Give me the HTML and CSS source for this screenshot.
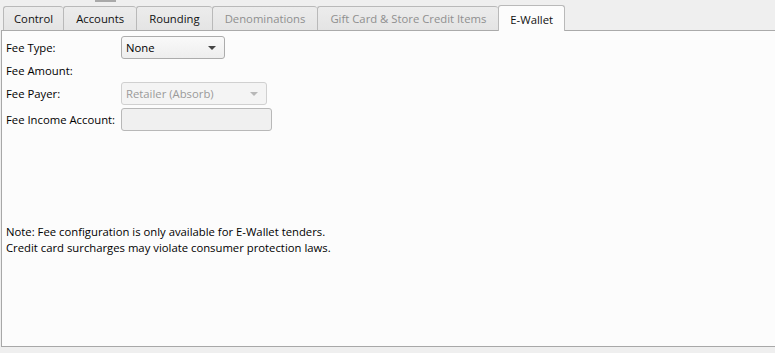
FILE: index.html
```html
<!DOCTYPE html>
<html lang="en">
<head>
    <meta charset="UTF-8">
    <title>Tender Settings</title>
    <link rel="stylesheet" href="styles.css">
</head>
<body>
    <div id="top-grip"></div>
    <div id="tab-pane">
        <div id="tab-header">
            <div class="tab">Control</div>
            <div class="tab">Accounts</div>
            <div class="tab">Rounding</div>
            <div class="tab disabled">Denominations</div>
            <div class="tab disabled">Gift Card &amp; Store Credit Items</div>
            <div class="tab selected">E-Wallet</div>
        </div>
        <div id="tab-content">
            <div id="fee-form">
                <div class="row">
                    <label>Fee Type:</label>
                    <div class="combo fee-type">
                        <span>None</span>
                        <span class="arrow"></span>
                    </div>
                </div>
                <div class="row">
                    <label>Fee Amount:</label>
                </div>
                <div class="row">
                    <label>Fee Payer:</label>
                    <div class="combo fee-payer disabled">
                        <span>Retailer (Absorb)</span>
                        <span class="arrow"></span>
                    </div>
                </div>
                <div class="row income">
                    <label>Fee Income Account:</label>
                    <input type="text" class="field" disabled>
                </div>
            </div>
            <div id="note">
                Note: Fee configuration is only available for E-Wallet tenders.<br>
                Credit card surcharges may violate consumer protection laws.
            </div>
        </div>
    </div>
</body>
</html>
```

FILE: styles.css
```css
body {
    margin: 0;
    background: #efefef;
    font-family: "Open Sans", "Noto Sans", sans-serif;
    font-size: 11.3px;
    color: #000;
}
#top-grip {
    width: 21px;
    height: 2px;
    margin-left: 95px;
    background: #a9a9a9;
}
#tab-pane {
    display: flex;
    flex-direction: column;
}
#tab-header {
    display: flex;
    align-items: flex-end;
    height: 28px;
    padding-left: 3px;
}
.tab {
    height: 23px;
    line-height: 23px;
    padding: 0 12px;
    border: 1px solid #b9b9b9;
    border-bottom: none;
    border-right: none;
    border-radius: 3px 3px 0 0;
    background: linear-gradient(#ececec, #e4e4e4);
    color: #111;
    box-sizing: content-box;
    white-space: nowrap;
}
.tab:first-child {
    padding: 0 10px;
}
.tab.disabled {
    color: #8f8f8f;
}
.tab.selected {
    height: 25px;
    line-height: 27px;
    padding: 0 11px;
    border-right: 1px solid #b9b9b9;
    background: #fcfcfc;
    margin-bottom: -1px;
    position: relative;
}
#tab-content {
    height: 310px;
    margin-left: 1px;
    border-top: 1px solid #aaaaaa;
    border-left: 1px solid #a8a8a8;
    border-bottom: 1px solid #a8a8a8;
    background: #fcfcfc;
    padding: 5px 0 0 4px;
    display: flex;
    flex-direction: column;
}
#fee-form {
    display: flex;
    flex-direction: column;
}
.row {
    display: flex;
    align-items: center;
    height: 23px;
}
.row.income {
    margin-top: 3px;
}
.row label {
    width: 115px;
    flex-shrink: 0;
    white-space: nowrap;
}
.combo {
    display: flex;
    align-items: center;
    justify-content: space-between;
    height: 21px;
    padding: 0 8px 0 4px;
    border: 1px solid #acacac;
    border-radius: 3px;
    background: linear-gradient(#f9f9f9, #eeeeee);
    box-sizing: content-box;
}
.fee-type {
    width: 90px;
}
.fee-payer {
    width: 132px;
}
.combo.disabled {
    color: #9a9a9a;
    border-color: #d0d0d0;
    background: #f4f4f4;
}
.arrow {
    width: 0;
    height: 0;
    border-left: 4px solid transparent;
    border-right: 4px solid transparent;
    border-top: 4px solid #444;
}
.combo.disabled .arrow {
    border-top-color: #b8b8b8;
}
.field {
    width: 149px;
    height: 21px;
    margin: 0;
    padding: 0;
    border: 1px solid #b8b8b8;
    border-radius: 3px;
    background: #f0f0f0;
    box-sizing: content-box;
}
#note {
    margin-top: 93px;
    line-height: 16px;
}
```
